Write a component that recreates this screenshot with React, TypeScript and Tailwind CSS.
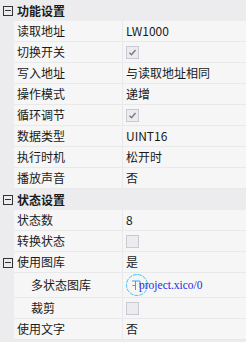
import React from "react";

const font = { fontFamily: '"Noto Sans CJK SC", "Noto Sans", sans-serif' };

function Minus() {
  return (
    <div className="w-[14px] flex items-center justify-center pl-[2px]">
      <div className="w-[10px] h-[10px] border border-[#333] flex items-center justify-center">
        <div className="w-[6px] h-[1px] bg-[#333]" />
      </div>
    </div>
  );
}

function Check({ checked }: { checked?: boolean }) {
  return (
    <div className="w-[13px] h-[13px] border border-[#c9c9d3] bg-[#ebebf0] flex items-center justify-center">
      {checked && (
        <svg width="9" height="9" viewBox="0 0 9 9">
          <path d="M1.5 4.8 L3.5 6.8 L7.5 2" stroke="#7a7a7a" strokeWidth="1.4" fill="none" />
        </svg>
      )}
    </div>
  );
}

function Header({ label }: { label: string }) {
  return (
    <div className="flex h-[21px] items-center">
      <Minus />
      <div className="pl-[3px] text-[12px] font-bold text-[#1a1a1a] leading-none">{label}</div>
    </div>
  );
}

function Row({
  label,
  children,
  indent,
  group,
  tall,
}: {
  label: string;
  children?: React.ReactNode;
  indent?: boolean;
  group?: boolean;
  tall?: boolean;
}) {
  return (
    <div className={"flex " + (tall ? "h-[25px]" : "h-[21px]")}>
      {group ? <Minus /> : <div className="w-[14px]" />}
      <div className="flex flex-1 bg-[#f6f6f6] border-b border-[#e9e9e9]">
        <div
          className={
            "w-[109px] border-r border-[#e9e9e9] flex items-center text-[12px] text-[#1a1a1a] leading-none " +
            (indent ? "pl-[17px]" : "pl-[3px]")
          }
        >
          {label}
        </div>
        <div className="flex-1 flex items-center pl-[3px] text-[12px] text-[#1a1a1a] leading-none">
          {children}
        </div>
      </div>
    </div>
  );
}

function ImageValue() {
  return (
    <div className="relative flex items-center h-full w-full">
      <svg width="24" height="24" viewBox="0 0 24 24" className="absolute left-[0px] top-[0px]">
        <circle cx="11" cy="12" r="10.5" stroke="#3cc4f2" strokeWidth="1" strokeDasharray="4 1" fill="none" />
        <path d="M6 8 H14 V15 M9.5 8 V17 M9.5 12.5 H6.5" stroke="#3aa6e6" strokeWidth="1" fill="none" />
      </svg>
      <span
        className="relative ml-[13px] mt-[1px] text-[11.5px] text-[#2a2ae0]"
        style={{ fontFamily: '"Liberation Serif", serif' }}
      >
        project.xico/0
      </span>
    </div>
  );
}

export default function App() {
  return (
    <div className="w-[246px] h-[342px] bg-[#ececef] overflow-hidden" style={font}>
      <Header label="功能设置" />
      <Row label="读取地址">LW1000</Row>
      <Row label="切换开关">
        <Check checked />
      </Row>
      <Row label="写入地址">与读取地址相同</Row>
      <Row label="操作模式">递增</Row>
      <Row label="循环调节">
        <Check checked />
      </Row>
      <Row label="数据类型">UINT16</Row>
      <Row label="执行时机">松开时</Row>
      <Row label="播放声音">否</Row>
      <Header label="状态设置" />
      <Row label="状态数">8</Row>
      <Row label="转换状态">
        <Check />
      </Row>
      <Row label="使用图库" group>
        是
      </Row>
      <Row label="多状态图库" indent tall>
        <ImageValue />
      </Row>
      <Row label="裁剪" indent>
        <Check />
      </Row>
      <Row label="使用文字">否</Row>
    </div>
  );
}
